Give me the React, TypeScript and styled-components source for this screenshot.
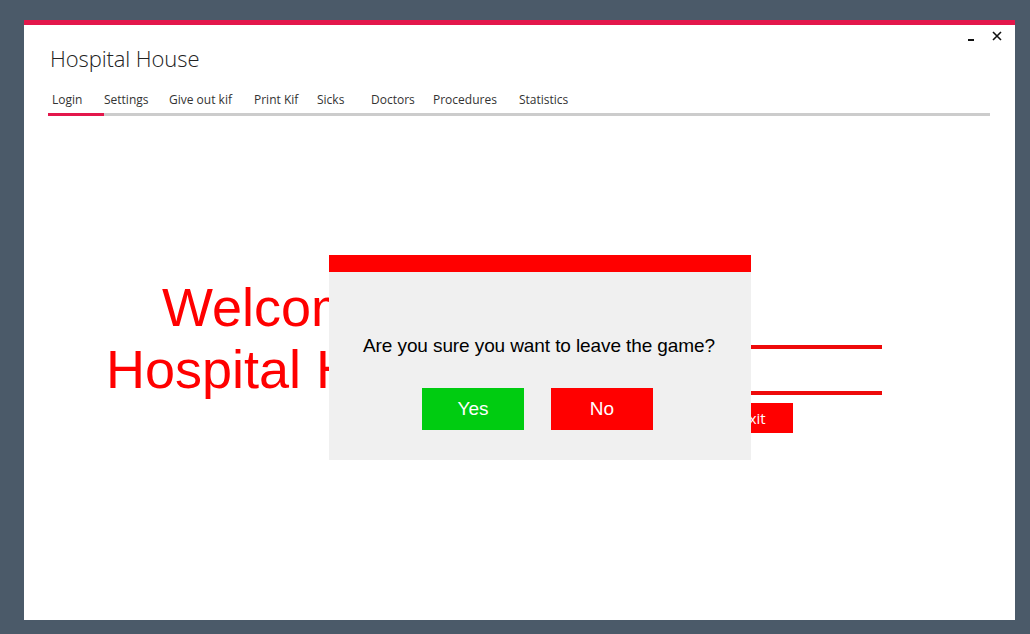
import React from "react";
import styled, { createGlobalStyle } from "styled-components";

const Global = createGlobalStyle`
  html, body { margin: 0; padding: 0; background: #4b5a69; }
  #root { width: 1030px; height: 634px; }
`;

const Page = styled.div`
  box-sizing: border-box;
  width: 1030px;
  height: 634px;
  padding: 20px 15px 14px 24px;
`;

const Window = styled.div`
  position: relative;
  box-sizing: border-box;
  height: 100%;
  background: #ffffff;
  border-top: 5px solid #e3174b;
  display: flex;
  flex-direction: column;
`;

const Header = styled.div`
  display: flex;
  justify-content: space-between;
  align-items: flex-start;
  padding: 0 13px 0 26px;
`;

const Title = styled.h1`
  margin: 17px 0 0 0;
  font-family: "Open Sans", "Noto Sans", sans-serif;
  font-weight: 300;
  font-size: 22px;
  letter-spacing: -0.1px;
  line-height: 32px;
  color: #222;
`;

const Controls = styled.div`
  display: flex;
  align-items: flex-end;
  gap: 16px;
  margin-top: 5px;
`;

const ControlButton = styled.div`
  width: 10px;
  height: 12px;
  display: flex;
  align-items: center;
  justify-content: center;
`;

const Tabs = styled.div`
  display: flex;
  margin: 17px 25px 0 24px;
  border-bottom: 3px solid #cccccc;
`;

const Tab = styled.div<{ $w?: number; $active?: boolean }>`
  position: relative;
  box-sizing: border-box;
  width: ${(p) => (p.$w ? `${p.$w}px` : "auto")};
  padding: 0 0 4px 4px;
  font-family: "Open Sans", "Noto Sans", sans-serif;
  font-size: 12px;
  line-height: 18px;
  color: #333;
  white-space: nowrap;
  ${(p) =>
    p.$active &&
    `&::after {
      content: "";
      position: absolute;
      left: 0;
      bottom: -3px;
      width: 56px;
      height: 3px;
      background: #e3174b;
    }`}
`;

const Content = styled.div`
  position: relative;
  flex: 1;
  display: flex;
  align-items: flex-start;
`;

const Welcome = styled.div`
  margin: 160px 0 0 82px;
  width: 480px;
  font-family: "Liberation Sans", Arial, sans-serif;
  font-size: 54px;
  line-height: 62px;
  color: #ff0000;
`;

const WelcomeLine = styled.div<{ $indent?: number }>`
  padding-left: ${(p) => p.$indent ?? 0}px;
  white-space: nowrap;
`;

const Form = styled.div`
  margin-top: 193px;
  margin-left: 14px;
  width: 282px;
  display: flex;
  flex-direction: column;
`;

const Field = styled.div<{ $gap?: number }>`
  height: 36px;
  margin-top: ${(p) => p.$gap ?? 0}px;
  border-bottom: 4px solid #ee0a0a;
`;

const ButtonRow = styled.div`
  display: flex;
  gap: 8px;
  margin-top: 8px;
  padding-left: 25px;
`;

const FormButton = styled.div`
  width: 80px;
  height: 30px;
  background: #ff0000;
  color: #fff;
  font-family: "Open Sans", "Noto Sans", sans-serif;
  font-size: 15px;
  display: flex;
  align-items: center;
  justify-content: center;
`;

const Dialog = styled.div`
  position: absolute;
  left: 305px;
  top: 139px;
  width: 422px;
  height: 205px;
  box-sizing: border-box;
  background: #f0f0f0;
  border-top: 17px solid #ff0000;
  display: flex;
  flex-direction: column;
  align-items: center;
`;

const Question = styled.div`
  margin-top: 63px;
  margin-right: 2px;
  font-family: "Liberation Sans", Arial, sans-serif;
  font-size: 19px;
  letter-spacing: -0.1px;
  line-height: 22px;
  color: #000;
`;

const DialogButtons = styled.div`
  display: flex;
  gap: 27px;
  margin-top: 31px;
  margin-right: 5px;
`;

const DialogButton = styled.div<{ $color: string }>`
  width: 102px;
  height: 42px;
  background: ${(p) => p.$color};
  color: #fff;
  font-family: "Liberation Sans", Arial, sans-serif;
  font-size: 19px;
  display: flex;
  align-items: center;
  justify-content: center;
`;

const tabs: { label: string; w?: number }[] = [
  { label: "Login", w: 52 },
  { label: "Settings", w: 65 },
  { label: "Give out kif", w: 85 },
  { label: "Print Kif", w: 63 },
  { label: "Sicks", w: 54 },
  { label: "Doctors", w: 62 },
  { label: "Procedures", w: 86 },
  { label: "Statistics" },
];

export default function App() {
  return (
    <>
      <Global />
      <Page>
        <Window>
          <Header>
            <Title>Hospital House</Title>
            <Controls>
              <ControlButton>
                <svg width="8" height="12" viewBox="0 0 8 12">
                  <rect x="1" y="9" width="6" height="2" fill="#111" />
                </svg>
              </ControlButton>
              <ControlButton>
                <svg width="10" height="10" viewBox="0 0 10 10">
                  <path d="M1 1 L9 9 M9 1 L1 9" stroke="#111" strokeWidth="1.6" />
                </svg>
              </ControlButton>
            </Controls>
          </Header>
          <Tabs>
            {tabs.map((t, i) => (
              <Tab key={t.label} $w={t.w} $active={i === 0}>
                {t.label}
              </Tab>
            ))}
          </Tabs>
          <Content>
            <Welcome>
              <WelcomeLine $indent={56}>Welcome to</WelcomeLine>
              <WelcomeLine>Hospital House</WelcomeLine>
            </Welcome>
            <Form>
              <Field />
              <Field $gap={6} />
              <ButtonRow>
                <FormButton>Login</FormButton>
                <FormButton>Exit</FormButton>
              </ButtonRow>
            </Form>
            <Dialog>
              <Question>Are you sure you want to leave the game?</Question>
              <DialogButtons>
                <DialogButton $color="#00cc11">Yes</DialogButton>
                <DialogButton $color="#ff0000">No</DialogButton>
              </DialogButtons>
            </Dialog>
          </Content>
        </Window>
      </Page>
    </>
  );
}
